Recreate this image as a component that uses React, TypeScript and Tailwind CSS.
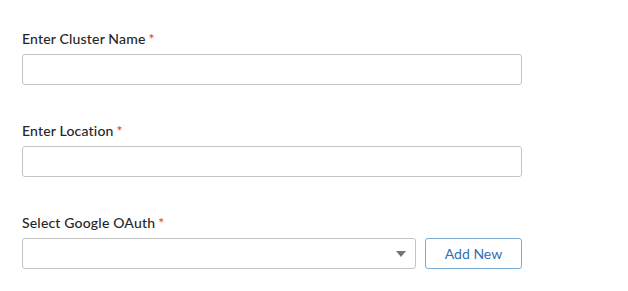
import React from "react";

function Label({ children }: { children: React.ReactNode }) {
  return (
    <label className="block text-[14px] leading-4 font-medium tracking-[0.18px] text-[#262626] mb-[7px]">
      {children}
      <span className="text-[#e53935] ml-[3px]">*</span>
    </label>
  );
}

export default function App() {
  return (
    <div
      className="w-[628px] h-[291px] bg-white pt-[31px] pl-[22px]"
      style={{ fontFamily: "Lato, 'Liberation Sans', sans-serif" }}
    >
      <div className="w-[500px] flex flex-col gap-[38px]">
        <div>
          <Label>Enter Cluster Name</Label>
          <input className="block w-full h-[31px] border border-[#c4c4c4] rounded-[3px] px-2 text-[14px] outline-none" />
        </div>
        <div>
          <Label>Enter Location</Label>
          <input className="block w-full h-[31px] border border-[#c4c4c4] rounded-[3px] px-2 text-[14px] outline-none" />
        </div>
        <div>
          <Label>Select Google OAuth</Label>
          <div className="flex gap-[9px]">
            <div className="relative flex-1 h-[31px] border border-[#c4c4c4] rounded-[3px]">
              <svg
                className="absolute right-[9px] top-[12px]"
                width="10"
                height="6"
                viewBox="0 0 10 6"
              >
                <path d="M0 0h10L5 6z" fill="#757575" />
              </svg>
            </div>
            <button className="w-[97px] h-[31px] border border-[#7aaed6] rounded-[3px] text-[14px] text-[#2f6fb3] bg-white">
              Add New
            </button>
          </div>
        </div>
      </div>
    </div>
  );
}
